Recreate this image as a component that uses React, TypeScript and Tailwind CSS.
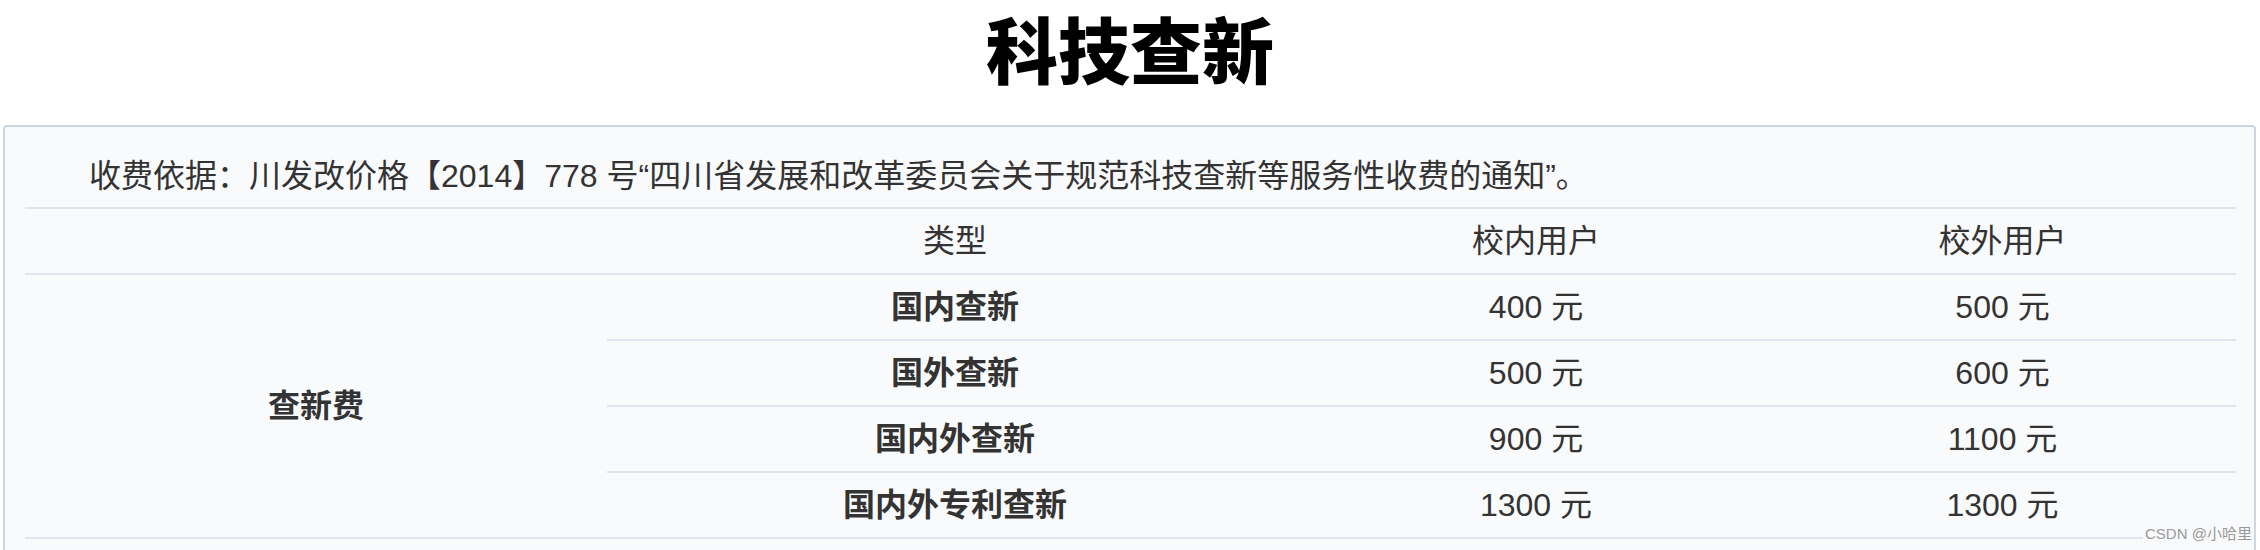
import React from "react";

const rows = [
  { name: "国内查新", inner: "400 元", outer: "500 元" },
  { name: "国外查新", inner: "500 元", outer: "600 元" },
  { name: "国内外查新", inner: "900 元", outer: "1100 元" },
  { name: "国内外专利查新", inner: "1300 元", outer: "1300 元" },
];

export default function App() {
  return (
    <div className="relative w-[2260px] h-[550px] overflow-hidden bg-white font-['Liberation_Sans','Noto_Sans_CJK_SC',sans-serif] text-[#333333]">
      <h1 className="text-center text-[72px] leading-[94px] pb-[31px] font-black text-black font-['Noto_Sans_CJK_SC',sans-serif]">
        科技查新
      </h1>
      <div className="ml-[3px] w-[2253px] border-2 border-[#cfd6e0] rounded-t-[4px] bg-[#f9fafc] pl-[20px] pr-[18px] pb-[40px]">
        <p className="text-[32px] leading-[40px] pt-[29px] pb-[11px] indent-[64px] border-b-2 border-[#dfe5ec]">
          收费依据：川发改价格【2014】778 号“四川省发展和改革委员会关于规范科技查新等服务性收费的通知”。
        </p>
        <div className="grid grid-cols-[582px_696px_466px_1fr] h-[66px] border-b-2 border-[#dfe5ec] text-[32px]">
          <div />
          <div className="flex items-center justify-center">类型</div>
          <div className="flex items-center justify-center">校内用户</div>
          <div className="flex items-center justify-center">校外用户</div>
        </div>
        <div className="flex border-b-2 border-[#dfe5ec] text-[32px]">
          <div className="w-[582px] flex items-center justify-center font-bold">查新费</div>
          <div className="flex-1 flex flex-col">
            {rows.map((r, i) => (
              <div
                key={r.name}
                className={
                  i < rows.length - 1
                    ? "grid grid-cols-[696px_466px_1fr] h-[66px] border-b-2 border-[#dfe5ec]"
                    : "grid grid-cols-[696px_466px_1fr] h-[64px]"
                }
              >
                <div className="flex items-center justify-center font-bold">{r.name}</div>
                <div className="flex items-center justify-center">{r.inner}</div>
                <div className="flex items-center justify-center">{r.outer}</div>
              </div>
            ))}
          </div>
        </div>
      </div>
      <div className="absolute left-[2143px] top-[524px] px-[2px] text-[15px] leading-[20px] text-[#999999] bg-[#f9fafc]">
        CSDN @小哈里
      </div>
    </div>
  );
}
